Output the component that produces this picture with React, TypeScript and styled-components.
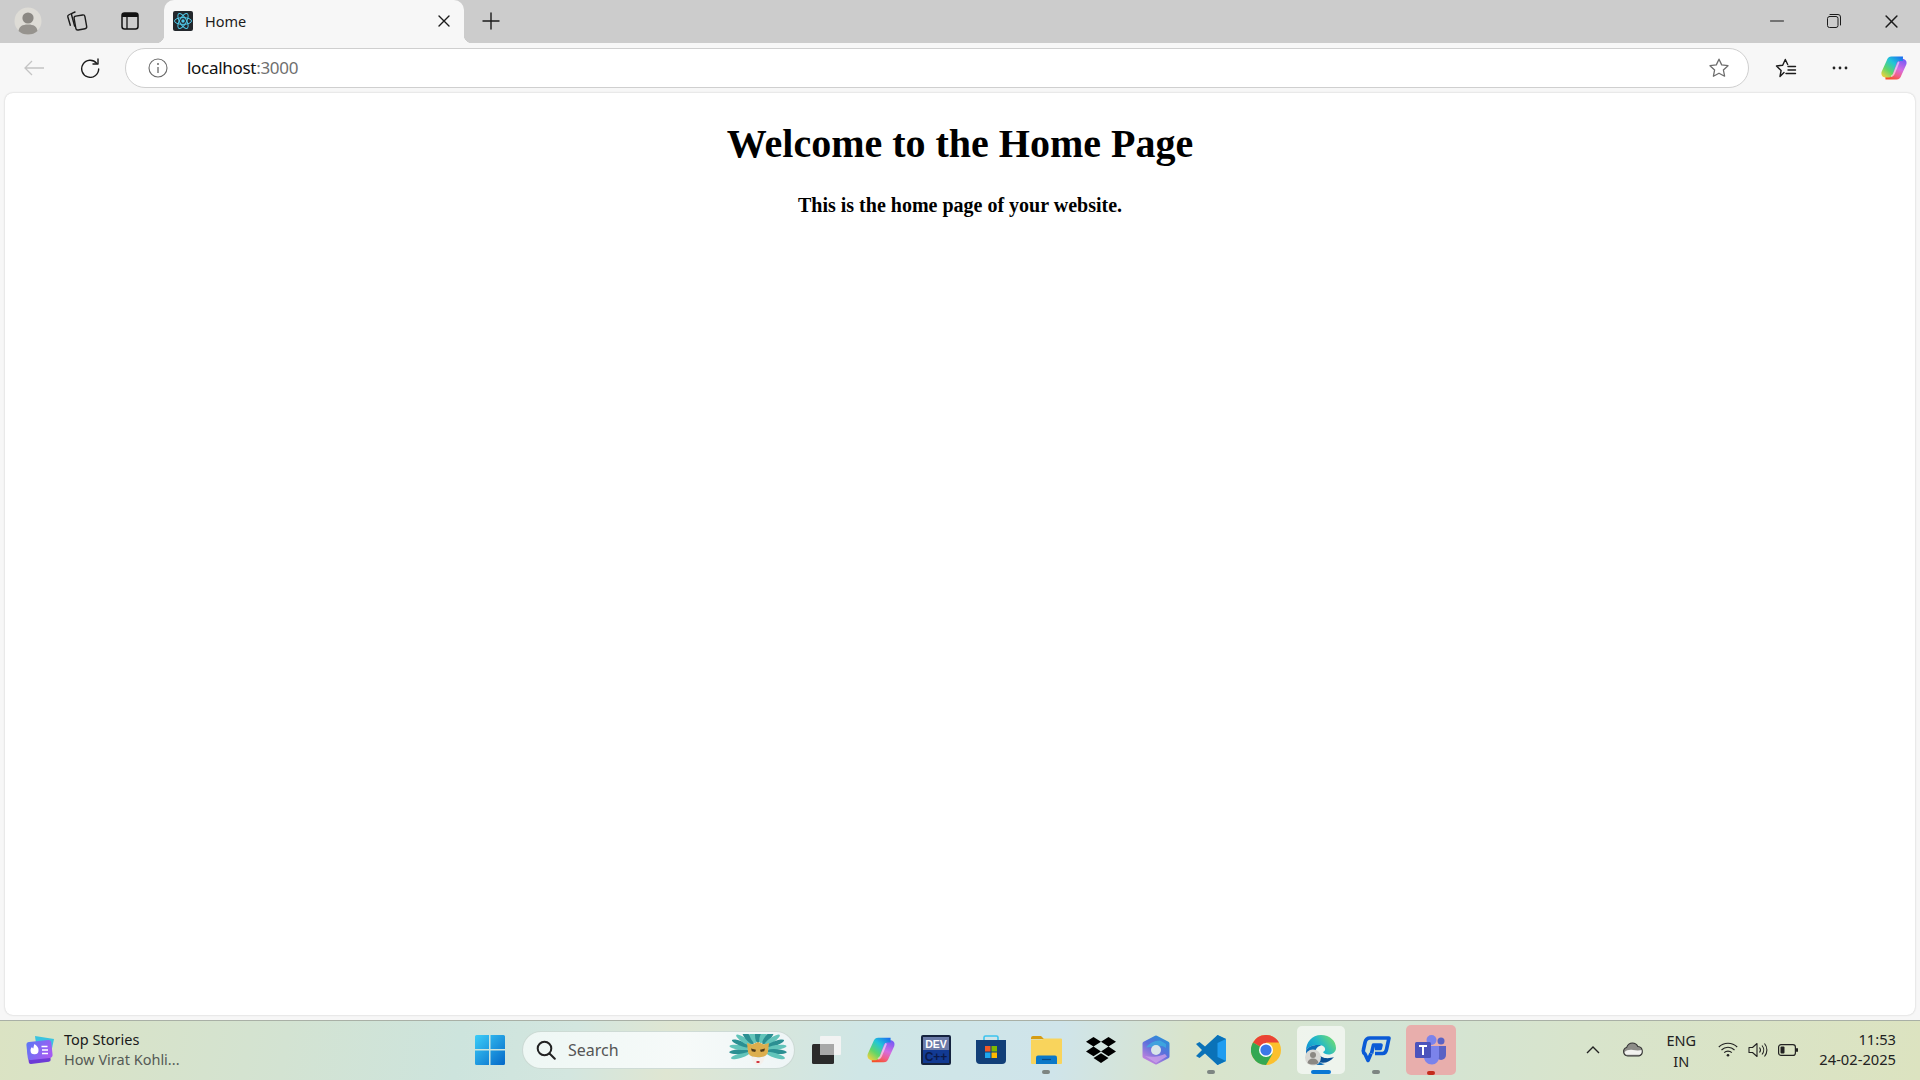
import styled, { createGlobalStyle } from "styled-components";

const GlobalStyle = createGlobalStyle`
    html, body {
        margin: 0;
        padding: 0;
        height: 100%;
        overflow: hidden;
    }
    body {
        font-family: "Noto Sans", "Open Sans", sans-serif;
        color: #000;
    }
`;

const Screen = styled.div`
    display: flex;
    flex-direction: column;
    width: 1920px;
    height: 1080px;
    background: #f7f7f7;
`;

const TabStrip = styled.div`
    display: flex;
    align-items: flex-start;
    flex: none;
    height: 43px;
    background: #cccccc;
`;

const StripButton = styled.div<{ $w: number }>`
    display: flex;
    align-items: center;
    justify-content: center;
    flex: none;
    width: ${p => p.$w}px;
    height: 42px;
`;

const Tab = styled.div`
    position: relative;
    display: flex;
    align-items: center;
    flex: none;
    align-self: stretch;
    width: 300px;
    margin-left: 2px;
    padding: 0 14px 2px 9px;
    box-sizing: border-box;
    background: #f7f7f7;
    border-radius: 10px 10px 0 0;
    &::before, &::after {
        content: "";
        position: absolute;
        bottom: 0;
        width: 8px;
        height: 8px;
    }
    &::before {
        left: -8px;
        background: radial-gradient(circle at 0 0, #cccccc 8px, #f7f7f7 8.5px);
    }
    &::after {
        right: -8px;
        background: radial-gradient(circle at 100% 0, #cccccc 8px, #f7f7f7 8.5px);
    }
`;

const TabTitle = styled.span`
    flex: 1;
    margin-left: 12px;
    font-size: 14.5px;
    color: #1c1c1c;
`;

const WindowControls = styled.div`
    display: flex;
    margin-left: auto;
`;

const Toolbar = styled.div`
    display: flex;
    align-items: center;
    flex: none;
    height: 50px;
    padding-bottom: 1px;
    box-sizing: border-box;
`;

const ToolButton = styled.div<{ $w: number }>`
    display: flex;
    align-items: center;
    justify-content: center;
    flex: none;
    width: ${p => p.$w}px;
    height: 40px;
`;

const AddressBar = styled.div`
    display: flex;
    align-items: center;
    flex: none;
    width: 1624px;
    height: 40px;
    margin: 0 9px 0 13px;
    box-sizing: border-box;
    padding: 0 19px 0 22px;
    background: #fff;
    border: 1px solid #cfcfcf;
    border-radius: 20px;
`;

const Url = styled.span`
    flex: 1;
    margin-left: 19px;
    font-size: 17px;
    letter-spacing: -0.3px;
    color: #111;
`;

const Port = styled.span`
    color: #6f6f6f;
`;

const Page = styled.main`
    flex: 1;
    margin: 0 5px 5px;
    background: #fff;
    border-radius: 8px;
    box-shadow: 0 0 2px rgba(0, 0, 0, 0.22);
    text-align: center;
    font-family: "Liberation Serif", "Times New Roman", serif;
`;

const Heading = styled.h1`
    margin: 28px 0 0;
    font-size: 40px;
    line-height: 46px;
    font-weight: 700;
`;

const Lead = styled.p`
    margin: 27px 0 0;
    font-size: 20px;
    line-height: 23px;
    font-weight: 700;
`;

const Taskbar = styled.footer`
    display: flex;
    align-items: center;
    flex: none;
    height: 60px;
    padding-bottom: 2px;
    box-sizing: border-box;
    border-top: 1px solid #a9b0a6;
    background: linear-gradient(100deg, #dbe3c3 0%, #d3e3d2 15%, #cde4dd 24%, #d3e6df 30%, #dfe6d2 35%, #cfe6e6 45%, #cfe4ea 55%, #d9e4cb 62%, #d3e4d5 72%, #d8e4cc 82%, #dce3c0 100%);
`;

const NewsWidget = styled.div`
    display: flex;
    align-items: center;
    flex: none;
    width: 462px;
    padding-left: 25px;
    box-sizing: border-box;
`;

const NewsText = styled.div`
    margin: -2px 0 0 9px;
    font-size: 14.5px;
    line-height: 20px;
`;

const NewsTitle = styled.div`
    color: #1a1a1a;
`;

const NewsSub = styled.div`
    color: #555a55;
`;

const TaskCell = styled.div<{ $active?: boolean; $alert?: boolean }>`
    position: relative;
    display: flex;
    align-items: center;
    justify-content: center;
    flex: none;
    width: ${p => (p.$active ? 48 : p.$alert ? 50 : 55)}px;
    height: ${p => (p.$alert ? 50 : 48)}px;
    margin: 0 ${p => (p.$active ? 3.5 : p.$alert ? 2.5 : 0)}px;
    border-radius: 5px;
    background: ${p => (p.$active ? "rgba(255, 255, 255, 0.6)" : p.$alert ? "#e8aeac" : "transparent")};
`;

const Indicator = styled.span<{ $w: number; $color: string }>`
    position: absolute;
    left: 50%;
    bottom: 0;
    width: ${p => p.$w}px;
    height: 4px;
    border-radius: 2px;
    transform: translateX(-50%);
    background: ${p => p.$color};
`;

const SearchBox = styled.div`
    display: flex;
    align-items: center;
    flex: none;
    width: 273px;
    height: 38px;
    margin: 0 3.5px 0 5px;
    padding: 0 6px 0 13px;
    box-sizing: border-box;
    border-radius: 19px;
    border: 1px solid rgba(170, 190, 180, 0.5);
    background: linear-gradient(90deg, #eef7f4, #f6faf9 60%, #eef5f6);
`;

const SearchLabel = styled.span`
    flex: 1;
    margin-left: 12px;
    font-size: 16px;
    color: #555;
`;

const Tray = styled.div`
    display: flex;
    align-items: center;
    margin-left: auto;
    padding-right: 24px;
`;

const TrayCell = styled.div<{ $w: number }>`
    display: flex;
    align-items: center;
    justify-content: center;
    flex: none;
    width: ${p => p.$w}px;
`;

const Lang = styled.div`
    margin-top: 2px;
    text-align: center;
    font-size: 14.5px;
    line-height: 21px;
    color: #222;
`;

const Clock = styled.div`
    margin: -2px 0 0 16px;
    text-align: right;
    font-size: 14.7px;
    line-height: 20px;
    color: #222;
`;

const line = { fill: "none", stroke: "#1b1b1b", strokeWidth: 1.4, strokeLinecap: "round", strokeLinejoin: "round" } as const;

const ProfileIcon = () => (
    <svg width="28" height="28" viewBox="0 0 28 28">
        <circle cx="14" cy="14" r="13.5" fill="#dedcd6" />
        <circle cx="14" cy="11" r="5.6" fill="#8b8883" />
        <path d="M4.5 24c.6-4.5 3.8-6.5 9.5-6.5s8.900 2 9.500 6.500c-2.500 2.400-5.700 3.500-9.500 3.500s-7-1.100-9.500-3.500z" fill="#96938e" />
    </svg>
);

const CollectionsIcon = () => (
    <svg width="22" height="22" viewBox="0 0 22 22" {...line}>
        <path d="M5.500 3.500 2.600 5c-.8.400-1 1-.800 1.800l2.500 8.500" />
        <path d="M9 2 6.400 3.200c-.8.400-1 1-.800 1.800l3 11" />
        <rect x="8.800" y="5.500" width="11" height="14" rx="2" transform="rotate(-10 14 12)" />
    </svg>
);

const SidebarIcon = () => (
    <svg width="18" height="18" viewBox="0 0 18 18">
        <rect x="1" y="1" width="16" height="16" rx="2.500" fill="none" stroke="#111" strokeWidth="1.500" />
        <path d="M1 5V3.500A2.500 2.500 0 0 1 3.500 1h11A2.500 2.500 0 0 1 17 3.500V5z" fill="#111" />
        <path d="M6 5v12" stroke="#111" strokeWidth="1.300" />
    </svg>
);

const ReactIcon = () => (
    <svg width="20" height="20" viewBox="0 0 20 20">
        <rect width="20" height="20" rx="2" fill="#23272c" />
        <g fill="none" stroke="#4fc8e8" strokeWidth="1">
            <ellipse cx="10" cy="10" rx="8.500" ry="3.400" />
            <ellipse cx="10" cy="10" rx="8.500" ry="3.400" transform="rotate(60 10 10)" />
            <ellipse cx="10" cy="10" rx="8.500" ry="3.400" transform="rotate(120 10 10)" />
        </g>
        <circle cx="10" cy="10" r="1.700" fill="#4fc8e8" />
    </svg>
);

const CloseIcon = ({ size = 12 }: { size?: number }) => (
    <svg width={size} height={size} viewBox="0 0 12 12" {...line}>
        <path d="M1 1l10 10M11 1 1 11" />
    </svg>
);

const PlusIcon = () => (
    <svg width="18" height="18" viewBox="0 0 18 18" {...line}>
        <path d="M9 1v16M1 9h16" />
    </svg>
);

const MinimizeIcon = () => (
    <svg width="14" height="14" viewBox="0 0 14 14" {...line} strokeWidth={1}>
        <path d="M.500 7h13" />
    </svg>
);

const RestoreIcon = () => (
    <svg width="14" height="14" viewBox="0 0 14 14" {...line} strokeWidth={1}>
        <rect x=".500" y="2.500" width="10.500" height="11" rx="2" />
        <path d="M3 .500h8a2.500 2.500 0 0 1 2.500 2.500v8" />
    </svg>
);

const BackIcon = () => (
    <svg width="20" height="16" viewBox="0 0 20 16" fill="none" stroke="#c4c4c4" strokeWidth="1.300">
        <path d="M20 8H1M8 1 1 8l7 7" />
    </svg>
);

const ReloadIcon = () => (
    <svg width="20" height="20" viewBox="0 0 20 20" {...line}>
        <path d="M16.600 5.200A8.500 8.500 0 1 0 18.700 11" />
        <path d="M18 1v5h-5" />
    </svg>
);

const InfoIcon = () => (
    <svg width="20" height="20" viewBox="0 0 20 20">
        <circle cx="10" cy="10" r="9" fill="none" stroke="#6a6a6a" strokeWidth="1.100" />
        <path d="M10 9v6" stroke="#6a6a6a" strokeWidth="1.300" />
        <circle cx="10" cy="6" r="1" fill="#6a6a6a" />
    </svg>
);

const StarIcon = () => (
    <svg width="20" height="20" viewBox="0 0 20 20" fill="none" stroke="#6d6d6d" strokeWidth="1.300" strokeLinejoin="round">
        <path d="M10 1.200l2.700 5.700 6.300.8-4.600 4.300 1.200 6.200L10 15.200l-5.600 3 1.200-6.200L1 7.700l6.300-.8z" />
    </svg>
);

const FavoritesIcon = () => (
    <svg width="22" height="20" viewBox="0 0 22 20" {...line}>
        <path d="M9 14.500l-4 4 1.100-6L1.500 8l6.200-.8L10.300 1.500l2.400 5" />
        <path d="M13 8.500h7.500M13 12h7.500M11 15.500h9.500" />
    </svg>
);

const DotsIcon = () => (
    <svg width="16" height="4" viewBox="0 0 16 4" fill="#222">
        <circle cx="2" cy="2" r="1.400" />
        <circle cx="8" cy="2" r="1.400" />
        <circle cx="14" cy="2" r="1.400" />
    </svg>
);

const CopilotIcon = ({ size }: { size: number }) => (
    <svg width={size} height={size} viewBox="0 0 28 28">
        <defs>
            <linearGradient id="copA" x1="0.900" y1="0" x2="0.100" y2="1">
                <stop offset="0" stopColor="#1a6ff0" />
                <stop offset="0.350" stopColor="#21c5d8" />
                <stop offset="0.680" stopColor="#5fd66a" />
                <stop offset="1" stopColor="#f5d13c" />
            </linearGradient>
            <linearGradient id="copB" x1="0.700" y1="0" x2="0.300" y2="1">
                <stop offset="0" stopColor="#7a5cf5" />
                <stop offset="0.450" stopColor="#d46ce0" />
                <stop offset="0.750" stopColor="#f0608a" />
                <stop offset="1" stopColor="#f5502a" />
            </linearGradient>
        </defs>
        <path d="M5.500 25.500h11c2.500 0 3.900-1.400 4.800-4l5-11c1.100-3-.7-5.500-3.700-5.500H19.500c-2.200 0-3.500 1-4.300 3.200L11.500 19c-.6 1.700-1.700 2.500-3.500 2.500H5.200z" fill="url(#copB)" />
        <path d="M23 2.500H11.500C9 2.500 7.600 3.900 6.700 6.500l-5 11C.6 20.500 2.400 23.500 5.500 23.500h3c2.200 0 3.500-1 4.300-3.200L16.500 9.500c.6-1.700 1.700-2.500 3.500-2.500h2.800z" fill="url(#copA)" />
        <path d="M18.500 8.500 14 19.500c-.5 1.300-1.200 2-2.200 2.500" fill="none" stroke="#fff" strokeOpacity="0.550" strokeWidth="1.800" strokeLinecap="round" />
    </svg>
);

const NewsIcon = () => (
    <svg width="30" height="30" viewBox="0 0 30 30">
        <defs>
            <linearGradient id="newsG" x1="0" y1="0" x2="1" y2="0.600">
                <stop offset="0" stopColor="#5a78f5" />
                <stop offset="1" stopColor="#a45cf2" />
            </linearGradient>
        </defs>
        <path d="M10 1l19 3-3 14-14-2z" fill="#3bc3df" />
        <rect x="3" y="12" width="22" height="16" rx="2" transform="rotate(-7 14 20)" fill="#6d3bd6" />
        <rect x="2" y="6" width="25" height="18" rx="3" transform="rotate(-6 14 15)" fill="url(#newsG)" />
        <path d="M9.500 9c2.800 2 4.200 4 4 6.200a4 4 0 0 1-8 .3c0-1.700.9-2.700 1.600-3.400.3 1 .6 1.300 1.200 1.500.4-1.600.4-3 1.200-4.600z" fill="#fff" />
        <path d="M16.500 11.500h6M17 15h6M17 18.500h6" stroke="#fff" strokeWidth="1.500" />
    </svg>
);

const StartIcon = () => (
    <svg width="30" height="30" viewBox="0 0 30 30">
        <defs>
            <linearGradient id="winG" x1="0" y1="0" x2="1" y2="1">
                <stop offset="0" stopColor="#3ccdf8" />
                <stop offset="1" stopColor="#0468c8" />
            </linearGradient>
        </defs>
        <path d="M1.500 0H14v14H0V1.500A1.500 1.500 0 0 1 1.500 0zM15.500 0h13A1.500 1.500 0 0 1 30 1.500V14H15.500zM0 15.500h14V30H1.500A1.500 1.500 0 0 1 0 28.500zM15.500 15.500H30v13a1.500 1.500 0 0 1-1.500 1.500h-13z" fill="url(#winG)" />
    </svg>
);

const SearchIcon = () => (
    <svg width="20" height="20" viewBox="0 0 20 20" fill="none" stroke="#222" strokeWidth="2" strokeLinecap="round">
        <circle cx="8.500" cy="8.500" r="6.800" />
        <path d="M13.500 13.500l5.300 5.300" />
    </svg>
);

const feathers = [-112, -96, -80, -64, -48, -32, -16, 0, 16, 32, 48, 64, 80, 96, 112];

const MaskIcon = () => (
    <svg width="60" height="32" viewBox="0 0 60 32">
        {feathers.map((angle, i) => (
            <ellipse
                key={angle}
                rx="3"
                ry="10"
                cy="-19"
                fill={i % 2 ? "#2b8f92" : "#62c4ba"}
                transform={`translate(30 16) scale(1 0.78) rotate(${angle})`}
            />
        ))}
        <path d="M30 14c-4 0-7 1-9 3 3 7 5 9 9 12 4-3 6-5 9-12-2-2-5-3-9-3z" fill="#2a8c8c" />
        <path d="M19 9l5 1.500 6-2.500 6 2.500 5-1.500-1 9c-.8 3.500-4 5.500-10 5.500s-9.200-2-10-5.500z" fill="#dcae4e" />
        <path d="M23 14.500l5 1.300-.8 2.200-3.400-.8zM37 14.500l-5 1.300.8 2.200 3.400-.8z" fill="#4d3a1a" />
        <path d="M23 22c3 1.500 11 1.500 14 0-.5 5-4 9.500-7 9.500s-6.500-4.500-7-9.500z" fill="#f4f0ec" />
        <ellipse cx="30" cy="28" rx="1.800" ry="1" fill="#cf2630" />
    </svg>
);

const TaskViewIcon = () => (
    <svg width="30" height="30" viewBox="0 0 30 30">
        <rect x="9" y="1" width="21" height="19" rx="1" fill="#f2f3f3" />
        <rect x="1" y="9" width="22" height="20" rx="1.500" fill="#2b2b2b" />
        <rect x="9" y="9" width="14" height="11" fill="#a8a8a8" />
    </svg>
);

const DevCppIcon = () => (
    <svg width="30" height="30" viewBox="0 0 30 30">
        <rect width="30" height="30" rx="2" fill="#15233f" />
        <rect x="2" y="2" width="26" height="13" fill="#6a7aa8" />
        <rect x="2" y="15" width="26" height="13" fill="#123a93" />
        <text x="15" y="13" textAnchor="middle" fontFamily="Liberation Sans, sans-serif" fontWeight="700" fontSize="10.500" fill="#fff">DEV</text>
        <text x="15" y="26" textAnchor="middle" fontFamily="Liberation Sans, sans-serif" fontWeight="700" fontSize="12" fill="#0c1a4a">C++</text>
    </svg>
);

const StoreIcon = () => (
    <svg width="30" height="30" viewBox="0 0 30 30">
        <path d="M8 6V2.500C8 1.500 8.500 1 9.500 1h11c1 0 1.500.5 1.500 1.500V6" fill="none" stroke="#3cc3ee" strokeWidth="1.600" />
        <path d="M0 5h30v20a4 4 0 0 1-4 4H4a4 4 0 0 1-4-4z" fill="#123f78" />
        <rect x="9" y="11" width="5.500" height="5.500" fill="#f05a28" />
        <rect x="15.500" y="11" width="5.500" height="5.500" fill="#7fba00" />
        <rect x="9" y="17.500" width="5.500" height="5.500" fill="#1ea8ee" />
        <rect x="15.500" y="17.500" width="5.500" height="5.500" fill="#fdb900" />
    </svg>
);

const FolderIcon = () => (
    <svg width="31" height="28" viewBox="0 0 31 28">
        <path d="M0 2a2 2 0 0 1 2-2h8l3 3h-13z" fill="#d69c12" />
        <path d="M0 3.500h11l2-1h17a1 1 0 0 1 1 1V27a1 1 0 0 1-1 1H1a1 1 0 0 1-1-1z" fill="#f9d45c" />
        <path d="M5 21.500a2 2 0 0 1 2-2h17a2 2 0 0 1 2 2V28H5z" fill="#0c78c8" />
        <path d="M11 23.500h9" stroke="#0a4a86" strokeWidth="1.200" />
    </svg>
);

const DropboxIcon = () => (
    <svg width="30" height="26" viewBox="0 0 30 26" fill="#000">
        <path d="M7.500 0 15 4.800 7.500 9.600 0 4.800zM22.500 0 30 4.800l-7.500 4.800L15 4.800zM7.500 9.600l7.500 4.800-7.500 4.800L0 14.400zM22.500 9.600l7.500 4.800-7.500 4.800-7.500-4.800zM15 16.300l7.500 4.800L15 26l-7.500-4.900z" />
    </svg>
);

const M365Icon = () => (
    <svg width="28" height="30" viewBox="0 0 28 30">
        <defs>
            <linearGradient id="m365" x1="0.800" y1="0" x2="0.200" y2="1">
                <stop offset="0" stopColor="#2b8ed8" />
                <stop offset="0.450" stopColor="#5b70dc" />
                <stop offset="1" stopColor="#c282de" />
            </linearGradient>
        </defs>
        <path d="M14 2.500 25.500 8.500v13L14 27.500 2.500 21.500v-13z" fill="url(#m365)" stroke="url(#m365)" strokeWidth="4" strokeLinejoin="round" />
        <path d="M4 12.500c3-4 8-7 14-7l6 3.500v4c-3-2-7-3-10-1.500z" fill="#3cb4e0" opacity="0.700" />
        <path d="M3 21c5 1.500 13 1 20-2l2 2.500L14 28z" fill="#caa0ea" opacity="0.800" />
        <circle cx="14" cy="15" r="5" fill="#d9e6e8" />
    </svg>
);

const VsCodeIcon = () => (
    <svg width="30" height="30" viewBox="0 0 30 30">
        <path d="M21.500 0 30 4v22l-8.500 4-12-12z" fill="#1f9cf0" />
        <path d="M21.500 0 9 11.500 3.500 7 0 9l6 6-6 6 3.500 2L9 18.500 21.500 30 30 26l-8.500-4V8L30 4z" fill="#0a72b8" />
    </svg>
);

const ChromeIcon = () => (
    <svg width="30" height="30" viewBox="0 0 30 30">
        <circle cx="15" cy="15" r="15" fill="#fbc02d" />
        <path d="M15 15 2 7.500A15 15 0 0 1 28 7.500H15z" fill="#ea4335" />
        <path d="M15 15 2 7.500A15 15 0 0 0 15 30l6.500-11.200z" fill="#34a853" />
        <circle cx="15" cy="15" r="7" fill="#fff" />
        <circle cx="15" cy="15" r="5.600" fill="#3b78e7" />
    </svg>
);

const EdgeIcon = () => (
    <svg width="32" height="32" viewBox="0 0 32 32">
        <defs>
            <linearGradient id="edgeA" x1="0" y1="0.800" x2="1" y2="0.300">
                <stop offset="0" stopColor="#0c8fd8" />
                <stop offset="0.500" stopColor="#22b8c8" />
                <stop offset="1" stopColor="#6fdc72" />
            </linearGradient>
        </defs>
        <path d="M16 1c9 0 15 6 15 13 0 4-3.500 6.500-7.500 6.500-2.500 0-5-1-5.500-2.500 3-1 3-5-1-6.500C11 10 3 12 1 17 1 8 7 1 16 1z" fill="url(#edgeA)" />
        <path d="M1 17c2-5 10-7 15.500-5.500C11 12 9 18 11 23c1.500 4 5 7 9 7-2 1-4 1-6 1C7 31 1 25 1 17z" fill="#0c6cb8" />
        <path d="M14 28c5 2 11 0 15-5-3 1-8 2-12 0-2-1-3-2-4-4-1 3-1 7 1 9z" fill="#0a4f96" />
        <circle cx="8" cy="23.500" r="8" fill="#d8d8d4" />
        <circle cx="8" cy="21" r="3" fill="#8b8883" />
        <path d="M2.500 29c.5-3 2.500-4.500 5.500-4.500s5 1.500 5.500 4.500c-3 2-8 2-11 0z" fill="#8b8883" />
    </svg>
);

const ChatIcon = () => (
    <svg width="30" height="27" viewBox="0 0 30 27" fill="none" stroke="#0a5ad6" strokeWidth="3.600" strokeLinejoin="round">
        <path d="M10 17.500 7 24.500 4 18c-1.500-1-2-2.500-1.500-4.500L4 6.500C4.600 3.700 6.500 2 9 2h19l-2.500 11.500c-.5 2.500-2 4-4 4H14" />
        <path d="M10.500 17.500l2-8.500H20l-.8 3.500H14" />
    </svg>
);

const TeamsIcon = () => (
    <svg width="32" height="30" viewBox="0 0 32 30">
        <circle cx="26" cy="6" r="3.500" fill="#5a62c4" />
        <path d="M21 11h10v9a5 5 0 0 1-5 5 5 5 0 0 1-5-5z" fill="#5a62c4" />
        <circle cx="16.500" cy="5" r="5" fill="#7b83eb" />
        <path d="M9 11h15v11a7 7 0 0 1-7 7.500c-4.500 0-8-3.500-8-7.500z" fill="#7b83eb" />
        <rect x="0" y="7" width="16" height="16" rx="1.500" fill="#4b53bc" />
        <path d="M4 11h8M8 11v9" stroke="#fff" strokeWidth="2" />
    </svg>
);

const ChevronIcon = () => (
    <svg width="14" height="8" viewBox="0 0 14 8" fill="none" stroke="#222" strokeWidth="1.400">
        <path d="M1 7l6-6 6 6" />
    </svg>
);

const CloudIcon = () => (
    <svg width="22" height="15" viewBox="0 0 20 14">
        <path d="M5 13a4 4 0 0 1-1-7.800C5 2.500 7 1 9.500 1c2.300 0 4 1.200 5 3.200a4.500 4.500 0 0 1 1 8.800z" fill="#8d8d88" />
        <path d="M2 9.500c2-2 5-2.500 8-2s6 .5 8.500 0c.8 1.800-.5 4.500-3 4.500H5c-1.500 0-2.700-1-3-2.500z" fill="#f2f2ef" />
        <path d="M5 13a4 4 0 0 1-1-7.800C5 2.500 7 1 9.500 1c2.300 0 4 1.200 5 3.200a4.500 4.500 0 0 1 1 8.800z" fill="none" stroke="#333" />
    </svg>
);

const WifiIcon = () => (
    <svg width="20" height="15" viewBox="0 0 20 15" fill="none" stroke="#222" strokeWidth="1.100">
        <path d="M.800 5a13 13 0 0 1 18.400 0M3.500 8a9.200 9.200 0 0 1 13 0M6.200 10.700a5.300 5.300 0 0 1 7.600 0" />
        <circle cx="10" cy="13.200" r="1.300" fill="#222" stroke="none" />
    </svg>
);

const VolumeIcon = () => (
    <svg width="20" height="16" viewBox="0 0 20 16" fill="none" stroke="#222" strokeWidth="1.100" strokeLinejoin="round">
        <path d="M1 5.500h3.500L9 1.500v13l-4.500-4H1z" />
        <path d="M11.500 5.500a4 4 0 0 1 0 5M14 3.500a7 7 0 0 1 0 9M16.500 1.500a10 10 0 0 1 0 13" />
    </svg>
);

const BatteryIcon = () => (
    <svg width="20" height="12" viewBox="0 0 20 12">
        <rect x=".600" y=".600" width="16.800" height="10.800" rx="2.500" fill="none" stroke="#222" strokeWidth="1.200" />
        <rect x="2.500" y="2.500" width="4" height="7" rx="1" fill="#222" />
        <rect x="18" y="4" width="2" height="4" rx="1" fill="#222" />
    </svg>
);

type TaskItem = {
    name: string;
    icon: React.ReactNode;
    active?: boolean;
    alert?: boolean;
    marker?: { w: number; color: string };
};

const taskItems: TaskItem[] = [
    { name: "task view", icon: <TaskViewIcon /> },
    { name: "copilot", icon: <CopilotIcon size={30} /> },
    { name: "dev", icon: <DevCppIcon /> },
    { name: "store", icon: <StoreIcon /> },
    { name: "explorer", icon: <FolderIcon />, marker: { w: 8, color: "#7d8582" } },
    { name: "dropbox", icon: <DropboxIcon /> },
    { name: "m365", icon: <M365Icon /> },
    { name: "code", icon: <VsCodeIcon />, marker: { w: 8, color: "#7d8582" } },
    { name: "chrome", icon: <ChromeIcon /> },
    { name: "edge", icon: <EdgeIcon />, active: true, marker: { w: 20, color: "#0a78d4" } },
    { name: "chat", icon: <ChatIcon />, marker: { w: 8, color: "#7d8582" } },
    { name: "teams", icon: <TeamsIcon />, alert: true, marker: { w: 8, color: "#c42b1c" } },
];

export default function App() {
    return (
        <Screen>
            <GlobalStyle />
            <TabStrip>
                <StripButton $w={56}><ProfileIcon /></StripButton>
                <StripButton $w={42}><CollectionsIcon /></StripButton>
                <StripButton $w={64}><SidebarIcon /></StripButton>
                <Tab>
                    <ReactIcon />
                    <TabTitle>Home</TabTitle>
                    <CloseIcon />
                </Tab>
                <StripButton $w={54}><PlusIcon /></StripButton>
                <WindowControls>
                    <StripButton $w={57}><MinimizeIcon /></StripButton>
                    <StripButton $w={57}><RestoreIcon /></StripButton>
                    <StripButton $w={58}><CloseIcon size={13} /></StripButton>
                </WindowControls>
            </TabStrip>
            <Toolbar>
                <ToolButton $w={68}><BackIcon /></ToolButton>
                <ToolButton $w={44}><ReloadIcon /></ToolButton>
                <AddressBar>
                    <InfoIcon />
                    <Url>localhost<Port>:3000</Port></Url>
                    <StarIcon />
                </AddressBar>
                <ToolButton $w={55}><FavoritesIcon /></ToolButton>
                <ToolButton $w={54}><DotsIcon /></ToolButton>
                <ToolButton $w={53}><CopilotIcon size={28} /></ToolButton>
            </Toolbar>
            <Page>
                <Heading>Welcome to the Home Page</Heading>
                <Lead>This is the home page of your website.</Lead>
            </Page>
            <Taskbar>
                <NewsWidget>
                    <NewsIcon />
                    <NewsText>
                        <NewsTitle>Top Stories</NewsTitle>
                        <NewsSub>How Virat Kohli...</NewsSub>
                    </NewsText>
                </NewsWidget>
                <TaskCell><StartIcon /></TaskCell>
                <SearchBox>
                    <SearchIcon />
                    <SearchLabel>Search</SearchLabel>
                    <MaskIcon />
                </SearchBox>
                {taskItems.map(item => (
                    <TaskCell key={item.name} $active={item.active} $alert={item.alert}>
                        {item.icon}
                        {item.marker && <Indicator $w={item.marker.w} $color={item.marker.color} />}
                    </TaskCell>
                ))}
                <Tray>
                    <TrayCell $w={48}><ChevronIcon /></TrayCell>
                    <TrayCell $w={32}><CloudIcon /></TrayCell>
                    <TrayCell $w={64}>
                        <Lang>ENG<br />IN</Lang>
                    </TrayCell>
                    <TrayCell $w={30}><WifiIcon /></TrayCell>
                    <TrayCell $w={30}><VolumeIcon /></TrayCell>
                    <TrayCell $w={30}><BatteryIcon /></TrayCell>
                    <Clock>11:53<br />24-02-2025</Clock>
                </Tray>
            </Taskbar>
        </Screen>
    );
}
